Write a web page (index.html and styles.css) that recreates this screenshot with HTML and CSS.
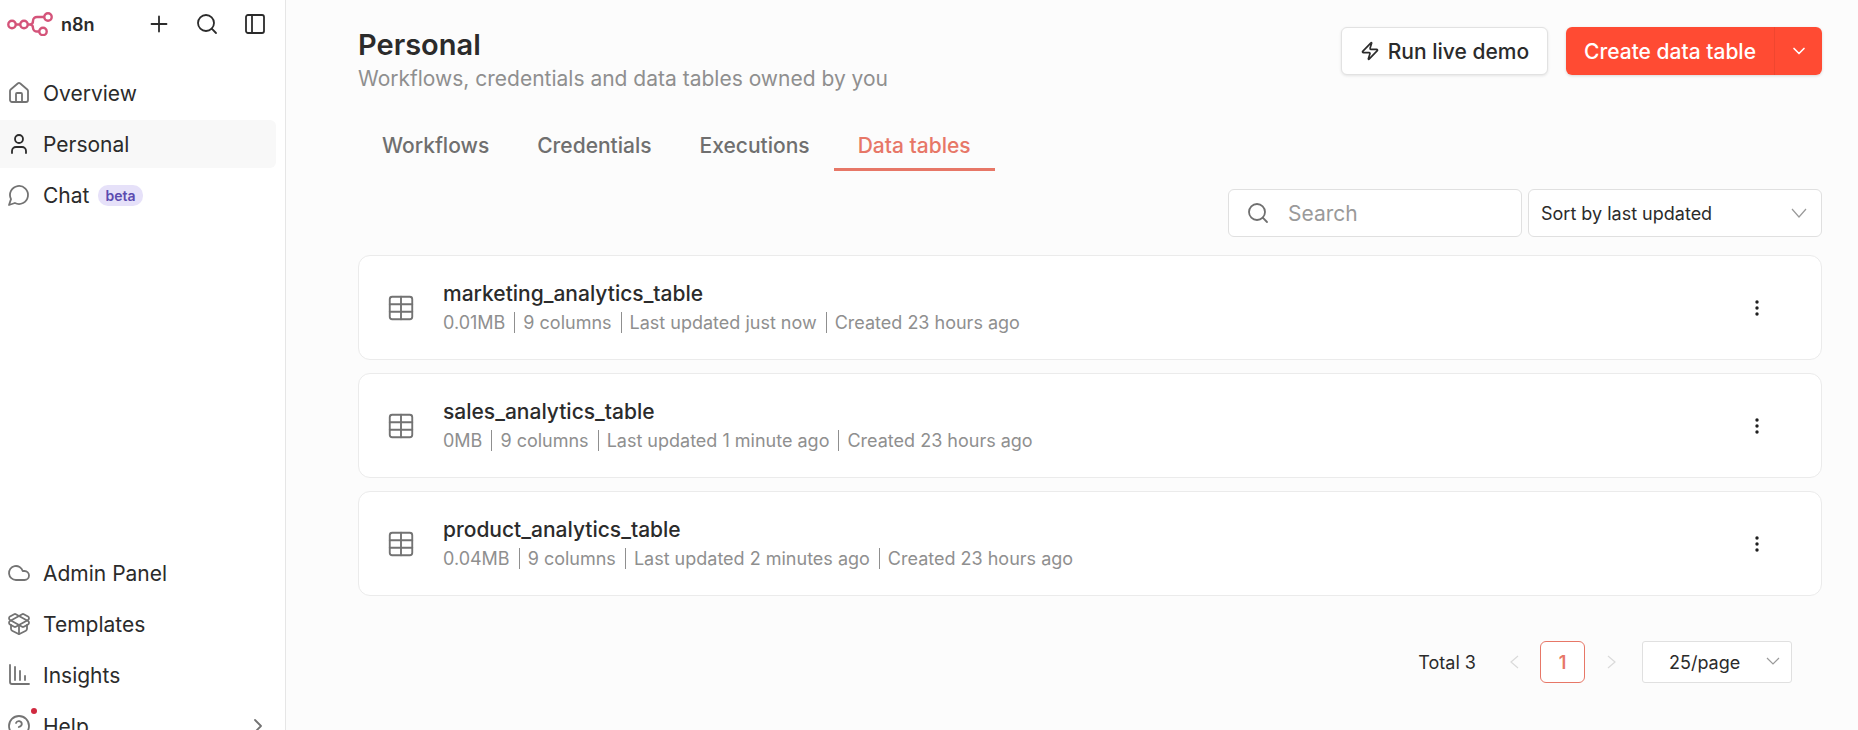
FILE: index.html
```
<!DOCTYPE html>
<html lang="en">
<head>
  <meta charset="UTF-8">
  <meta name="viewport" content="width=device-width, initial-scale=1.0">
  <title>Personal - n8n</title>
  <link rel="stylesheet" href="styles.css">
</head>
<body>
  <aside class="sidebar">
    <div class="sidebar-header">
      <a href="#" class="logo">
        <svg class="logo-mark" viewBox="0 0 46 24" aria-hidden="true">
          <circle cx="5" cy="12.5" r="3.7"/>
          <circle cx="17" cy="12.5" r="3.7"/>
          <circle cx="41" cy="5" r="3.7"/>
          <circle cx="36" cy="19.5" r="3.7"/>
          <path d="M9 12.5h4M21 12.5h2c3 0 3-2 3-3.5 0-3 2-4 4-4h7M23 12.5c3 0 3 2 3 3.5 0 2 2 3.5 4 3.5h2"/>
        </svg>
        <span>n8n</span>
      </a>
      <div class="sidebar-actions">
        <button type="button" class="icon-btn" aria-label="Create">
          <svg class="icon" viewBox="0 0 24 24"><path d="M4.5 12h15M12 4.5v15"/></svg>
        </button>
        <button type="button" class="icon-btn" aria-label="Search">
          <svg class="icon" viewBox="0 0 24 24"><circle cx="11" cy="11" r="8"/><path d="m21 21-4.3-4.3"/></svg>
        </button>
        <button type="button" class="icon-btn" aria-label="Toggle sidebar">
          <svg class="icon" viewBox="0 0 24 24"><rect x="3" y="3" width="18" height="18" rx="2"/><path d="M9 3v18"/></svg>
        </button>
      </div>
    </div>

    <nav class="menu">
      <a href="#" class="menu-item">
        <svg class="icon" viewBox="0 0 24 24"><path d="M15 21v-8a1 1 0 0 0-1-1h-4a1 1 0 0 0-1 1v8"/><path d="M3 10a2 2 0 0 1 .709-1.528l7-5.999a2 2 0 0 1 2.582 0l7 5.999A2 2 0 0 1 21 10v9a2 2 0 0 1-2 2H5a2 2 0 0 1-2-2z"/></svg>
        <span>Overview</span>
      </a>
      <a href="#" class="menu-item active">
        <svg class="icon" viewBox="0 0 24 24"><path d="M19 21v-2a4 4 0 0 0-4-4H9a4 4 0 0 0-4 4v2"/><circle cx="12" cy="7" r="4"/></svg>
        <span>Personal</span>
      </a>
      <a href="#" class="menu-item">
        <svg class="icon" viewBox="0 0 24 24"><path d="M7.9 20A9 9 0 1 0 4 16.1L2 22Z"/></svg>
        <span>Chat</span>
        <span class="badge">beta</span>
      </a>
    </nav>

    <nav class="menu menu-bottom">
      <a href="#" class="menu-item">
        <svg class="icon" viewBox="0 0 24 24"><path d="M17.5 19H9a7 7 0 1 1 6.71-9h1.79a4.5 4.5 0 1 1 0 9Z"/></svg>
        <span>Admin Panel</span>
      </a>
      <a href="#" class="menu-item">
        <svg class="icon" viewBox="0 0 24 24"><path d="M12 22v-9"/><path d="M15.17 2.21a1.67 1.67 0 0 1 1.63 0L21 4.57a1.93 1.93 0 0 1 0 3.36L8.82 14.79a1.655 1.655 0 0 1-1.64 0L3 12.43a1.93 1.93 0 0 1 0-3.36z"/><path d="M20 13v3.87a2.06 2.06 0 0 1-1.11 1.83l-6 3.08a1.93 1.93 0 0 1-1.78 0l-6-3.08A2.06 2.06 0 0 1 4 16.87V13"/><path d="M21 12.43a1.93 1.93 0 0 0 0-3.36L8.83 2.2a1.64 1.64 0 0 0-1.63 0L3 4.57a1.93 1.93 0 0 0 0 3.36l12.18 6.86a1.636 1.636 0 0 0 1.63 0z"/></svg>
        <span>Templates</span>
      </a>
      <a href="#" class="menu-item">
        <svg class="icon" viewBox="0 0 24 24"><path d="M3 2v17a2 2 0 0 0 2 2h17"/><path d="M8 4v13M13 8v9M18 13v4"/></svg>
        <span>Insights</span>
      </a>
      <a href="#" class="menu-item">
        <span class="help-icon">
          <svg class="icon" viewBox="0 0 24 24"><circle cx="12" cy="12" r="10"/><path d="M9 9a3 3 0 0 1 5.8 1c0 2-3 3-3 3M12 17h.01"/></svg>
          <span class="dot"></span>
        </span>
        <span>Help</span>
        <svg class="icon arrow" viewBox="0 0 24 24"><path d="m9 18 6-6-6-6"/></svg>
      </a>
    </nav>
  </aside>

  <main class="content">
    <header class="page-header">
      <div>
        <h1>Personal</h1>
        <p class="subtitle">Workflows, credentials and data tables owned by you</p>
      </div>
      <div class="header-actions">
        <button type="button" class="btn btn-light">
          <svg class="icon icon-sm" viewBox="0 0 24 24"><path d="M4 14a1 1 0 0 1-.78-1.63l9.9-10.2a.5.5 0 0 1 .86.46l-1.92 6.02A1 1 0 0 0 13 10h7a1 1 0 0 1 .78 1.63l-9.9 10.2a.5.5 0 0 1-.86-.46l1.92-6.02A1 1 0 0 0 11 14z"/></svg>
          Run live demo
        </button>
        <div class="btn-group">
          <button type="button" class="btn btn-primary">Create data table</button>
          <button type="button" class="btn btn-primary btn-toggle" aria-label="More options">
            <svg class="icon icon-sm" viewBox="0 0 24 24"><path d="m6 9 6 6 6-6"/></svg>
          </button>
        </div>
      </div>
    </header>

    <nav class="tabs">
      <a href="#" class="tab">Workflows</a>
      <a href="#" class="tab">Credentials</a>
      <a href="#" class="tab">Executions</a>
      <a href="#" class="tab tab-active">Data tables</a>
    </nav>

    <div class="filters">
      <label class="search">
        <svg class="icon" viewBox="0 0 24 24"><circle cx="11" cy="11" r="8"/><path d="m21 21-4.3-4.3"/></svg>
        <input type="text" placeholder="Search" aria-label="Search">
      </label>
      <div class="select sort">
        <select aria-label="Sort">
          <option>Sort by last updated</option>
        </select>
        <svg class="chevron" viewBox="0 0 16 16"><path d="m1 4 7 8 7-8"/></svg>
      </div>
    </div>

    <div class="cards">
      <article class="card">
        <svg class="icon card-icon" viewBox="0 0 24 24"><rect x="3" y="3" width="18" height="18" rx="2"/><path d="M12 3v18M3 9h18M3 15h18"/></svg>
        <div class="card-body">
          <h2>marketing_analytics_table</h2>
          <p class="meta"><span>0.01MB</span><span>9 columns</span><span>Last updated just now</span><span>Created 23 hours ago</span></p>
        </div>
        <button type="button" class="icon-btn" aria-label="Actions">
          <svg class="dots" viewBox="0 0 24 24"><circle cx="12" cy="6" r="1.7"/><circle cx="12" cy="12" r="1.7"/><circle cx="12" cy="18" r="1.7"/></svg>
        </button>
      </article>
      <article class="card">
        <svg class="icon card-icon" viewBox="0 0 24 24"><rect x="3" y="3" width="18" height="18" rx="2"/><path d="M12 3v18M3 9h18M3 15h18"/></svg>
        <div class="card-body">
          <h2>sales_analytics_table</h2>
          <p class="meta"><span>0MB</span><span>9 columns</span><span>Last updated 1 minute ago</span><span>Created 23 hours ago</span></p>
        </div>
        <button type="button" class="icon-btn" aria-label="Actions">
          <svg class="dots" viewBox="0 0 24 24"><circle cx="12" cy="6" r="1.7"/><circle cx="12" cy="12" r="1.7"/><circle cx="12" cy="18" r="1.7"/></svg>
        </button>
      </article>
      <article class="card">
        <svg class="icon card-icon" viewBox="0 0 24 24"><rect x="3" y="3" width="18" height="18" rx="2"/><path d="M12 3v18M3 9h18M3 15h18"/></svg>
        <div class="card-body">
          <h2>product_analytics_table</h2>
          <p class="meta"><span>0.04MB</span><span>9 columns</span><span>Last updated 2 minutes ago</span><span>Created 23 hours ago</span></p>
        </div>
        <button type="button" class="icon-btn" aria-label="Actions">
          <svg class="dots" viewBox="0 0 24 24"><circle cx="12" cy="6" r="1.7"/><circle cx="12" cy="12" r="1.7"/><circle cx="12" cy="18" r="1.7"/></svg>
        </button>
      </article>
    </div>

    <div class="pagination">
      <span class="total">Total 3</span>
      <button type="button" class="page-arrow" aria-label="Previous page" disabled>
        <svg class="chevron" viewBox="0 0 16 16"><path d="m11 2-7 6 7 6"/></svg>
      </button>
      <button type="button" class="page-number">1</button>
      <button type="button" class="page-arrow" aria-label="Next page" disabled>
        <svg class="chevron" viewBox="0 0 16 16"><path d="m5 2 7 6-7 6"/></svg>
      </button>
      <div class="select page-size">
        <select aria-label="Page size">
          <option>25/page</option>
        </select>
        <svg class="chevron" viewBox="0 0 16 16"><path d="m2 4 6 6 6-6"/></svg>
      </div>
    </div>
  </main>
</body>
</html>
```
FILE: styles.css
```
* {
  box-sizing: border-box;
}

body {
  display: flex;
  height: 100vh;
  margin: 0;
  overflow: hidden;
  background-color: #fcfcfc;
  color: #2b2b2b;
  font-family: Inter, sans-serif;
  font-size: 21px;
}

a {
  color: inherit;
  text-decoration: none;
}

h1, h2, p {
  margin: 0;
}

button, input, select {
  font: inherit;
  color: inherit;
}

button {
  cursor: pointer;
}

.icon {
  width: 24px;
  height: 24px;
  flex-shrink: 0;
  fill: none;
  stroke: currentColor;
  stroke-width: 1.8;
  stroke-linecap: round;
  stroke-linejoin: round;
}

.icon-sm {
  width: 20px;
  height: 20px;
  stroke-width: 2;
}

.icon-btn {
  display: flex;
  padding: 0;
  border: none;
  background: none;
}

/* Sidebar */
.sidebar {
  display: flex;
  flex-direction: column;
  flex-shrink: 0;
  width: 286px;
  height: 100vh;
  overflow: hidden;
  background-color: #fff;
  border-right: 1px solid #e6e6e6;
}

.sidebar-header {
  display: flex;
  align-items: center;
  justify-content: space-between;
  height: 48px;
  padding: 0 18px 0 7px;
}

.logo {
  display: flex;
  align-items: center;
  gap: 8px;
  font-size: 18px;
  font-weight: 600;
}

.logo-mark {
  width: 46px;
  height: 24px;
  fill: none;
  stroke: #d4547a;
  stroke-width: 2.4;
}

.sidebar-actions {
  display: flex;
  gap: 24px;
}

.menu {
  display: flex;
  flex-direction: column;
  flex-shrink: 0;
  gap: 3px;
  padding: 21px 9px 0 0;
}

.menu-bottom {
  margin-top: auto;
  margin-bottom: -20px;
}

.menu-item {
  display: flex;
  align-items: center;
  height: 48px;
  padding: 0 6px 0 7px;
  gap: 12px;
  border-radius: 0 6px 6px 0;
}

.menu-item .icon {
  color: #737373;
}

.menu-item.active {
  background-color: #f8f8f8;
}

.menu-item.active .icon {
  color: #2b2b2b;
}

.menu-item .arrow {
  margin-left: auto;
}

.badge {
  padding: 0 7px;
  border-radius: 10px;
  background-color: #e6e1f9;
  color: #5b4bb0;
  font-size: 14px;
  font-weight: 600;
  line-height: 21px;
  margin-left: -3px;
}

.help-icon {
  display: flex;
  position: relative;
}

.dot {
  position: absolute;
  top: -6px;
  right: -6px;
  width: 6px;
  height: 6px;
  border-radius: 50%;
  background-color: #d0293f;
}

/* Content */
.content {
  flex: 1;
  min-width: 0;
  padding: 27px 36px 0 72px;
}

.page-header {
  display: flex;
  justify-content: space-between;
  align-items: flex-start;
}

h1 {
  font-size: 29px;
  font-weight: 600;
  line-height: 36px;
}

.subtitle {
  color: #8f8f8f;
  line-height: 32px;
}

.header-actions {
  display: flex;
  gap: 18px;
}

.btn {
  display: flex;
  align-items: center;
  gap: 8px;
  height: 48px;
  padding: 0 18px;
  border: none;
  border-radius: 6px;
  font-weight: 500;
}

.btn-light {
  border: 1px solid #e2e2e2;
  background-color: #fff;
  box-shadow: 0 1px 3px rgba(0, 0, 0, 0.1);
}

.btn-group {
  display: flex;
  border-radius: 6px;
  box-shadow: 0 1px 3px rgba(0, 0, 0, 0.15);
}

.btn-primary {
  border-radius: 6px 0 0 6px;
  background-color: #ff4b33;
  color: #fff;
}

.btn-toggle {
  width: 48px;
  padding: 0 14px;
  border-left: 1px solid #f0462f;
  border-radius: 0 6px 6px 0;
}

.tabs {
  display: flex;
  margin-top: 25px;
}

.tab {
  padding: 9px 24px 6px;
  border-bottom: 3px solid transparent;
  color: #6f6f6f;
  font-weight: 500;
  line-height: 33px;
}

.tab-active {
  border-color: #e77767;
  color: #e77767;
}

.filters {
  display: flex;
  justify-content: flex-end;
  gap: 6px;
  margin: 18px 0;
}

.search,
.select {
  display: flex;
  align-items: center;
  height: 48px;
  border: 1px solid #e0e0e0;
  border-radius: 6px;
  background-color: #fff;
}

.search {
  width: 294px;
  padding: 0 17px;
  gap: 18px;
  color: #6f6f6f;
}

.search input {
  width: 100%;
  min-width: 0;
  padding: 0;
  border: none;
  outline: none;
  background: none;
}

.search input::placeholder {
  color: #9a9a9a;
}

.select {
  position: relative;
  font-size: 18px;
}

.select select {
  width: 100%;
  height: 100%;
  padding: 0 12px;
  border: none;
  outline: none;
  background: none;
  appearance: none;
}

.select .chevron {
  position: absolute;
  right: 14px;
  pointer-events: none;
}

.chevron {
  width: 16px;
  height: 16px;
  fill: none;
  stroke: #9a9a9a;
  stroke-width: 1.2;
}

.sort {
  width: 294px;
}

.cards {
  display: flex;
  flex-direction: column;
  gap: 13px;
}

.card {
  display: flex;
  align-items: center;
  min-height: 105px;
  padding: 0 52px 0 27px;
  border: 1px solid #ebebeb;
  border-radius: 12px;
  background-color: #fff;
}

.card-icon {
  width: 30px;
  height: 30px;
  color: #737373;
  stroke-width: 1.5;
}

.card-body {
  flex: 1;
  margin-left: 27px;
}

.card h2 {
  font-size: 21px;
  font-weight: 500;
  line-height: 30px;
}

.meta {
  display: flex;
  align-items: center;
  margin-top: 3px;
  padding-bottom: 4px;
  color: #8f8f8f;
  font-size: 18px;
  line-height: 21px;
}

.meta span + span {
  margin-left: 9px;
  padding-left: 8px;
  border-left: 1px solid #8f8f8f;
}

.dots {
  width: 24px;
  height: 24px;
  fill: #1f1f1f;
}

.pagination {
  display: flex;
  align-items: center;
  justify-content: flex-end;
  margin-top: 45px;
  padding-right: 30px;
  font-size: 18px;
}

.total {
  margin-right: 30px;
}

.page-arrow {
  display: flex;
  justify-content: center;
  width: 18px;
  padding: 0;
  border: none;
  background: none;
}

.page-arrow .chevron {
  stroke: #dadada;
}

.page-number {
  width: 45px;
  height: 42px;
  margin: 0 17px 0 16px;
  padding: 0;
  border: 1px solid #e77767;
  border-radius: 6px;
  background-color: #fff;
  color: #e77767;
  font-weight: 600;
}

.page-size {
  width: 150px;
  height: 42px;
  margin-left: 22px;
  border-radius: 3px;
}

.page-size select {
  padding: 0 26px;
}

.page-size .chevron {
  right: 10px;
}
```
